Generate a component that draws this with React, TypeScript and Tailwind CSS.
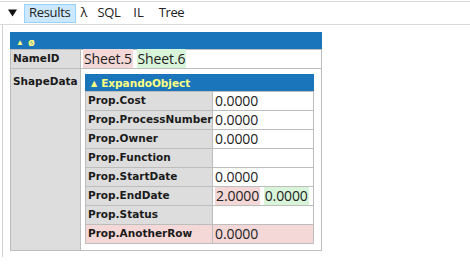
import React from 'react';

const rows: { label: string; values: { text: string; tone?: 'red' | 'green' }[]; rowTone?: 'red' }[] = [
  { label: 'Prop.Cost', values: [{ text: '0.0000' }] },
  { label: 'Prop.ProcessNumber', values: [{ text: '0.0000' }] },
  { label: 'Prop.Owner', values: [{ text: '0.0000' }] },
  { label: 'Prop.Function', values: [] },
  { label: 'Prop.StartDate', values: [{ text: '0.0000' }] },
  { label: 'Prop.EndDate', values: [{ text: '2.0000', tone: 'red' }, { text: '0.0000', tone: 'green' }] },
  { label: 'Prop.Status', values: [] },
  { label: 'Prop.AnotherRow', values: [{ text: '0.0000' }], rowTone: 'red' },
];

const labelFont = "font-['Tahoma','DejaVu_Sans',sans-serif] font-bold text-[10.5px] text-[#1a1a1a]";
const valueFont = "font-['Segoe_UI','Open_Sans',sans-serif] text-[14px] tracking-[-0.1px] text-[#222]";

export default function App() {
  return (
    <div className="w-[470px] h-[264px] bg-white overflow-hidden font-['Segoe_UI','Open_Sans',sans-serif]">
      {/* toolbar */}
      <div className="mt-px border-t border-[#d9d9d9] h-[24px] flex items-center border-b text-[13px] text-[#222]">
        <svg className="ml-[8px]" width="9" height="8" viewBox="0 0 9 8">
          <path d="M0 0.5 H9 L4.5 7.5 Z" fill="#111" />
        </svg>
        <div className="ml-[7px] h-[19px] px-[4px] flex items-center bg-[#cce8ff] border border-[#99d1ff] tracking-[-0.3px]">Results</div>
        <span className="ml-[5px]">λ</span>
        <span className="ml-[10px] tracking-[-0.4px]">SQL</span>
        <span className="ml-[13px]">IL</span>
        <span className="ml-[15px] tracking-[-0.4px]">Tree</span>
      </div>

      {/* results area */}
      <div className="ml-[2px] h-[232px] border-l border-[#d0d0d0] pt-[7px] pl-[7px]">
        <table className="border-collapse border border-[#1a75bb] w-[312px] table-fixed">
          <colgroup>
            <col className="w-[70px]" />
            <col />
          </colgroup>
          <tbody>
            <tr>
              <td colSpan={2} className="bg-[#1a75bb] h-[17px] px-[5px] text-[#ffff80] text-[11px] font-bold leading-none align-middle">
                <span className="text-[8px] mr-[4px] align-[1px]">▲</span>ø
              </td>
            </tr>
            <tr>
              <td className={`${labelFont} bg-[#dddddd] border border-[#bdbdbd] h-[19px] px-[2px] align-middle`}>NameID</td>
              <td className={`${valueFont} border border-[#bdbdbd] px-[2px] leading-none align-middle`}>
                <span className="bg-[#f4d7d7] px-px">Sheet.5</span>{' '}
                <span className="bg-[#d9f5d9] px-px">Sheet.6</span>
              </td>
            </tr>
            <tr>
              <td className={`${labelFont} bg-[#dddddd] border border-[#bdbdbd] px-[2px] pt-[5px] align-top`}>ShapeData</td>
              <td className="border border-[#bdbdbd] pt-[5px] pb-[6px] pl-[4px] pr-[7px] align-top">
                <table className="border-collapse border border-[#1a75bb] w-[229px] table-fixed">
                  <colgroup>
                    <col className="w-[127px]" />
                    <col />
                  </colgroup>
                  <tbody>
                    <tr>
                      <td colSpan={2} className={`${labelFont} !text-[#ffff80] bg-[#1a75bb] h-[17px] px-[5px] leading-none align-middle`}>
                        <span className="text-[8px] mr-[4px] align-[1px]">▲</span>ExpandoObject
                      </td>
                    </tr>
                    {rows.map((r) => (
                      <tr key={r.label}>
                        <td className={`${labelFont} ${r.rowTone === 'red' ? 'bg-[#f4d7d7]' : 'bg-[#dddddd]'} border border-[#bdbdbd] h-[19px] px-[2px] whitespace-nowrap align-middle`}>
                          {r.label}
                        </td>
                        <td className={`${valueFont} ${r.rowTone === 'red' ? 'bg-[#f4d7d7]' : ''} border border-[#bdbdbd] px-[2px] leading-none align-middle whitespace-nowrap overflow-hidden`}>
                          {r.values.map((v, i) => (
                            <React.Fragment key={i}>
                              {i > 0 && ' '}
                              <span className={v.tone === 'red' ? 'bg-[#f4d7d7] px-px' : v.tone === 'green' ? 'bg-[#d9f5d9] px-px' : ''}>{v.text}</span>
                            </React.Fragment>
                          ))}
                        </td>
                      </tr>
                    ))}
                  </tbody>
                </table>
              </td>
            </tr>
          </tbody>
        </table>
      </div>
    </div>
  );
}
